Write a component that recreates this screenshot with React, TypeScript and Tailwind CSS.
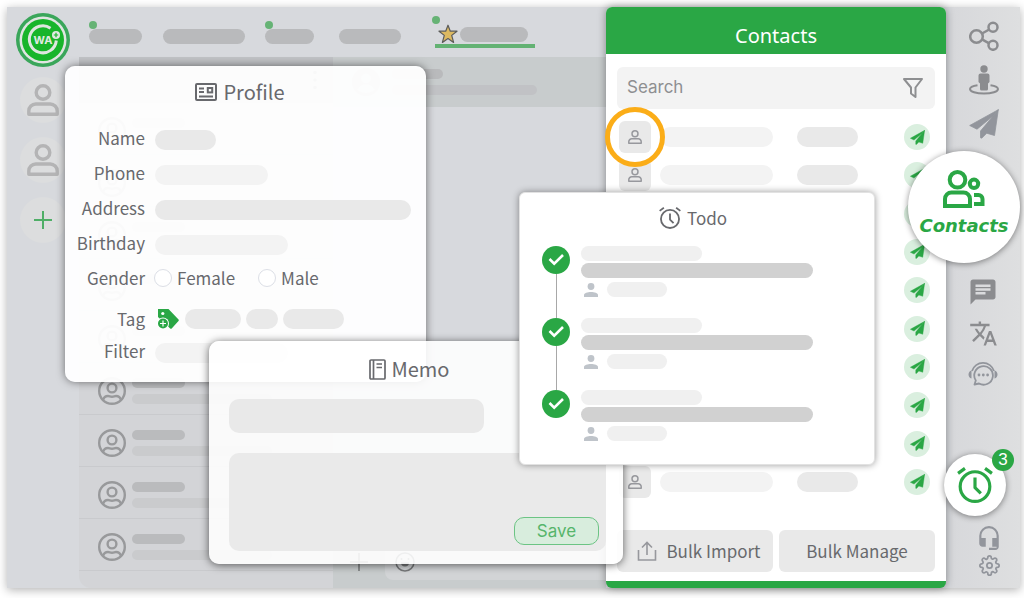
import React, { useState } from 'react';
import { MdChat, MdTranslate, MdHeadsetMic } from 'react-icons/md';
import { FiSettings } from 'react-icons/fi';

const chatRows = [1, 2, 3, 4, 5, 6, 7, 8, 9];
const contactRows = [1, 2, 3, 4, 5, 6, 7, 8, 9, 10];
const todos = [1, 2, 3];

const tabs = [
  { id: 1, width: 'w-[53px]', unread: true },
  { id: 2, width: 'w-[82px]', unread: false },
  { id: 3, width: 'w-[49px]', unread: true },
  { id: 4, width: 'w-[62px]', unread: false },
];

function PersonIcon({ className }) {
  return (
    <svg viewBox="0 0 32 32" className={className} fill="none" stroke="currentColor" strokeWidth="3.4">
      <circle cx="16" cy="8.5" r="6.8" />
      <path d="M1.8 30.2V27a7 7 0 0 1 7-7h14.4a7 7 0 0 1 7 7v3.2z" strokeLinejoin="round" />
    </svg>
  );
}

function AccountIcon({ className }) {
  return (
    <svg viewBox="0 0 28 28" className={className} fill="none" stroke="currentColor" strokeWidth="2.4">
      <circle cx="14" cy="14" r="12.8" />
      <circle cx="14" cy="11" r="4.4" />
      <path d="M5 23c1-3.500 3.500-4 5-4 1.500 0 2 .7 4 .7s2.500-.7 4-.7c1.500 0 4 .5 5 4" />
    </svg>
  );
}

function AlarmIcon({ className, strokeWidth }) {
  return (
    <svg viewBox="0 0 34 34" className={className} fill="none" stroke="currentColor" strokeWidth={strokeWidth} strokeLinejoin="round">
      <circle cx="17" cy="18.500" r="14" />
      <path d="M17 10v9.500l5.500 5.500M1 6l6.500-4.700M33 6l-6.500-4.700" />
    </svg>
  );
}

function PlaneIcon({ className }) {
  return (
    <svg viewBox="0 0 30 30" className={className} fill="currentColor" stroke="currentColor" strokeLinejoin="round" strokeWidth=".8">
      <path d="M29.300.700L.700 16.500l7.300 3.700L24 7z" />
      <path d="M29.300.700L25.500 26.500l-7.800-2.300-5 5L11.500 28.700V22z" />
    </svg>
  );
}

function LiveViewIcon() {
  return (
    <svg viewBox="0 0 30 30" className="size-[30px]" fill="currentColor">
      <circle cx="15" cy="4" r="3.700" />
      <path d="M11.500 8.500h7a2 2 0 0 1 2 2V17l-1.500 1.500v5.500a1.500 1.500 0 0 1-1.500 1.500h-5a1.500 1.500 0 0 1-1.500-1.500v-5.500L9.500 17v-6.500a2 2 0 0 1 2-2z" />
      <path d="M8.500 20.200c-4.500.7-7.500 2-7.500 3.800 0 2.600 6.200 4.600 14 4.600s14-2 14-4.600c0-1.800-3-3.100-7.500-3.800" fill="none" stroke="currentColor" strokeWidth="2" />
    </svg>
  );
}

function ShareIcon() {
  return (
    <svg viewBox="0 0 30 30" className="size-[30px]" fill="none" stroke="currentColor" strokeWidth="2.5">
      <circle cx="7.500" cy="15.500" r="6.300" />
      <circle cx="24" cy="6.300" r="4.500" />
      <circle cx="24" cy="24.300" r="4.500" />
      <path d="M13 12.500l7.200-4M13 18.300l7.200 4" />
    </svg>
  );
}

function SupportChatIcon() {
  return (
    <svg viewBox="0 0 30 26" className="h-[26px] w-[30px]" fill="none" stroke="currentColor" strokeWidth="1.800">
      <path d="M4 11a11.500 11.500 0 0 1 22 0" />
      <path d="M6.500 24.500l1.300-4a9.300 9.300 0 1 1 3.200 3z" strokeLinejoin="round" />
      <path d="M3.500 10.500c-4 1-4 7 0 8zM26.500 10.500c4 1 4 7 0 8z" fill="currentColor" stroke="none" />
      <g fill="currentColor" stroke="none">
        <circle cx="11" cy="15" r="1.400" />
        <circle cx="15.300" cy="15" r="1.400" />
        <circle cx="19.600" cy="15" r="1.400" />
      </g>
    </svg>
  );
}

function ContactsIcon() {
  return (
    <svg viewBox="0 0 42 38" className="h-[38px] w-[42px]" fill="none" stroke="currentColor" strokeWidth="4">
      <circle cx="14.500" cy="9.800" r="7.800" />
      <path d="M2 36v-7a6.500 6.500 0 0 1 6.500-6.500h12A6.500 6.500 0 0 1 27 29v7z" />
      <circle cx="31" cy="13.800" r="4.200" />
      <path d="M31 25h4.500a4 4 0 0 1 4 4v5H31" />
    </svg>
  );
}

function LogoIcon() {
  return (
    <svg viewBox="0 0 54 54" className="size-[54px]">
      <circle cx="27" cy="27" r="27" fill="#3aa65a" />
      <circle cx="27" cy="27" r="23.500" fill="#e0e5e1" />
      <circle cx="27" cy="27" r="21" fill="#18b52b" />
      <path d="M34.500 15.200A13.500 13.500 0 1 0 40.300 27.500" fill="none" stroke="#dfe6e0" strokeWidth="3" />
      <circle cx="40" cy="22" r="4" fill="#e3e9e4" />
      <path d="M40 19.800v4.400M37.800 22h4.400" stroke="#18b52b" strokeWidth="1.200" />
      <text x="27" y="31" textAnchor="middle" fontSize="11" fontWeight="700" fontFamily="Inter, sans-serif" fill="#e3e9e4">WA</text>
    </svg>
  );
}

function LeftRail() {
  return (
    <nav className="flex w-[71px] shrink-0 flex-col items-center gap-[14px] pt-[6px] text-[#b4b4b5]">
      <button aria-label="Home" className="-mb-1">
        <LogoIcon />
      </button>
      <button aria-label="Account one" className="flex size-[46px] items-center justify-center rounded-full bg-[#dcddde]">
        <PersonIcon className="size-8" />
      </button>
      <button aria-label="Account two" className="flex size-[46px] items-center justify-center rounded-full bg-[#dcddde]">
        <PersonIcon className="size-8" />
      </button>
      <button aria-label="Add account" className="flex size-[46px] items-center justify-center rounded-full bg-[#dcddde] text-[#4fae67]">
        <svg viewBox="0 0 20 20" className="size-5" stroke="currentColor" strokeWidth="2">
          <path d="M10 1v18M1 10h18" />
        </svg>
      </button>
    </nav>
  );
}

function TabBar() {
  return (
    <div className="grid h-[50px] shrink-0 grid-cols-[74px_102px_74px_96px_100px] items-center pl-[11px]">
      {tabs.map((tab) => (
        <div key={tab.id} className="relative pt-2">
          {tab.unread && <span className="absolute top-0 left-0 size-2 rounded-full bg-[#66b375]" />}
          <div className={`h-[15px] rounded-full bg-[#b9babc] ${tab.width}`} />
        </div>
      ))}
      <div className="relative border-b-4 border-[#63b273] pt-2">
        <span className="absolute top-0 -left-[3px] size-2 rounded-full bg-[#66b375]" />
        <div className="flex items-center gap-[2px] pl-[3px]">
          <svg viewBox="0 0 20 20" className="size-5 shrink-0" fill="#dcb961" stroke="#5c5c5a" strokeWidth="1.2" strokeLinejoin="round">
            <path d="M10 1.200l2.300 6H19l-5.300 4.200 1.900 7L10 14.500l-5.600 3.900 1.900-7L1 7.200h6.700z" />
          </svg>
          <div className="h-[15px] w-[68px] rounded-full bg-[#b9babc]" />
        </div>
      </div>
    </div>
  );
}

function ChatList() {
  return (
    <div className="ml-px w-[254px] shrink-0 rounded-bl-xl bg-[#d3d4d7]">
      <div className="flex h-[46px] items-center justify-end bg-[#c0c2c5] pr-4 text-[#77787b]">
        <svg viewBox="0 0 4 20" className="h-5 w-1" fill="currentColor">
          <circle cx="2" cy="2.500" r="1.800" />
          <circle cx="2" cy="10" r="1.800" />
          <circle cx="2" cy="17.500" r="1.800" />
        </svg>
      </div>
      {chatRows.map((row) => (
        <div key={row} className="flex h-[52px] gap-[6px] border-b border-[#c9cacd] pt-[14px] pl-[19px] text-[#98999b]">
          <AccountIcon className="size-7 shrink-0" />
          <div className="space-y-[6px] pt-px">
            <div className="h-[10px] w-[53px] rounded-full bg-[#babbbd]" />
            <div className="h-[10px] w-[140px] rounded-full bg-[#cacbcd]" />
          </div>
        </div>
      ))}
    </div>
  );
}

function ChatPane() {
  return (
    <div className="flex min-w-0 flex-1 flex-col">
      <div className="flex h-[50px] items-center gap-[12px] bg-[#c8cccd] pl-[19px] text-[#a5a8aa]">
        <svg viewBox="0 0 28 28" className="size-7 shrink-0">
          <circle cx="14" cy="14" r="14" fill="currentColor" />
          <circle cx="14" cy="10.500" r="5" fill="#c8cccd" />
          <path d="M5 22c4-8 14-8 18 0-5 4-13 4-18 0z" fill="#c8cccd" />
        </svg>
        <div className="space-y-[6px]">
          <div className="h-[10px] w-[51px] rounded-full bg-[#b9babc]" />
          <div className="h-[10px] w-[145px] rounded-full bg-[#c1c2c5]" />
        </div>
      </div>
      <div className="mt-auto flex h-[52px] items-center gap-4 bg-[#c8cccd] pl-[16px] text-[#77797b]">
        <svg viewBox="0 0 20 20" className="size-5 shrink-0" stroke="currentColor" strokeWidth="1.500">
          <path d="M10 1v18M1 10h18" />
        </svg>
        <div className="flex h-9 flex-1 items-center rounded-l-lg bg-[#d2d4d6] pl-[10px]">
          <svg viewBox="0 0 20 20" className="size-5" fill="none" stroke="currentColor" strokeWidth="1.500">
            <circle cx="10" cy="10" r="9" />
            <circle cx="6.500" cy="7" r="1" fill="currentColor" stroke="none" />
            <circle cx="13.500" cy="7" r="1" fill="currentColor" stroke="none" />
            <path d="M6 10.500h8a4 4 0 0 1-8 0z" fill="currentColor" stroke="none" />
          </svg>
        </div>
      </div>
    </div>
  );
}

function ContactsPanel() {
  const [query, setQuery] = useState('');

  return (
    <section className="isolate flex w-[340px] shrink-0 flex-col rounded-md border-b-[7px] border-[#2aa745] bg-white shadow-[0_0_8px_rgba(0,0,0,0.4)]">
      <h2 className="flex h-[47px] items-center justify-center rounded-t-md bg-[#2aa745] pt-[10px] font-['Noto_Sans'] text-xl text-white">Contacts</h2>
      <div className="flex flex-1 flex-col px-[11px] pt-[13px] pb-[9px]">
        <label className="flex h-[42px] items-center rounded-md bg-[#f3f3f3] pr-3 pl-[10px] text-[#8e8f91]">
          <input
            type="text"
            aria-label="Search contacts"
            placeholder="Search"
            value={query}
            onChange={(e) => setQuery(e.target.value)}
            className="min-w-0 flex-1 bg-transparent font-['Inter'] text-[17px] outline-none placeholder:text-[#8e8f91]"
          />
          <svg viewBox="0 0 20 20" className="size-5" fill="none" stroke="currentColor" strokeWidth="2" strokeLinejoin="round">
            <path d="M1 1h18l-6.500 8.500V19L8 15.500v-6z" />
          </svg>
        </label>

        <div className="mt-3 mb-8 flex flex-1 flex-col justify-between">
          {contactRows.map((row, i) => (
            <div key={row} className="flex items-center pr-[5px] pl-[2px]">
              <div className={i === 0 ? 'relative z-10 mr-[9px] size-8' : 'mr-[9px] size-8'}>
                {i === 0 && <span className="absolute -inset-[14px] rounded-full border-[5px] border-[#fbad18] bg-white" />}
                <button aria-label="Open profile" className="relative flex size-8 items-center justify-center rounded-md bg-[#e9e9e9] text-[#97989d]">
                  <PersonIcon className="size-[14px]" />
                </button>
              </div>
              <div className="h-5 w-[113px] rounded-full bg-[#f3f3f3]" />
              <div className="ml-6 h-5 w-[61px] rounded-full bg-[#e9e9e9]" />
              <button aria-label="Send message" className="ml-auto flex size-[26px] items-center justify-center rounded-full bg-[#daefdf] text-[#2aa745]">
                <PlaneIcon className="size-[15px]" />
              </button>
            </div>
          ))}
        </div>

        <div className="grid grid-cols-2 gap-[6px] text-[17px] text-[#68696d]">
          <button className="flex h-[42px] items-center justify-center gap-[9px] rounded-md bg-[#e9e9e9] pl-2">
            <svg viewBox="0 0 20 20" className="size-5 text-[#97989d]" fill="none" stroke="currentColor" strokeWidth="1.600">
              <path d="M1.500 9v10h17V9M10 14V1.500M5 6.500l5-5 5 5" />
            </svg>
            Bulk Import
          </button>
          <button className="h-[42px] rounded-md bg-[#e9e9e9]">Bulk Manage</button>
        </div>
      </div>
    </section>
  );
}

function RightRail() {
  return (
    <nav className="ml-[5px] flex w-[69px] shrink-0 flex-col bg-linear-to-r from-[#d7d8db] to-[#dedfe0] pt-[14px] pb-3 text-[#8b8c8f]">
      <div className="flex flex-col items-center gap-[14px] pr-1">
        <button aria-label="Share"><ShareIcon /></button>
        <button aria-label="Live view"><LiveViewIcon /></button>
        <button aria-label="Broadcast" className="text-[#92959c]"><PlaneIcon className="size-[30px]" /></button>
      </div>
      <div className="mt-[138px] flex flex-col items-center gap-3 pr-[5px]">
        <button aria-label="Quick replies"><MdChat className="size-[30px]" /></button>
        <button aria-label="Translate"><MdTranslate className="size-[29px]" /></button>
        <button aria-label="Support chat" className="text-[#92959c]"><SupportChatIcon /></button>
      </div>
      <div className="mt-auto flex flex-col items-center gap-1 pl-[7px] text-[#92959c]">
        <button aria-label="Customer service"><MdHeadsetMic className="size-[26px]" /></button>
        <button aria-label="Settings"><FiSettings className="size-[21px]" /></button>
      </div>
    </nav>
  );
}

function Field({ id, label, width }) {
  return (
    <div className="flex h-[35px] items-center gap-[10px]">
      <label htmlFor={id} className="w-[80px] text-right">{label}</label>
      <input id={id} type="text" className={`mt-1 h-5 rounded-full px-3 text-xs outline-none ${width}`} />
    </div>
  );
}

function ProfileCard() {
  return (
    <form className="absolute top-[66px] left-[65px] w-[361px] rounded-[10px] bg-white/95 pt-[11px] pb-[14px] text-[17px] leading-[30px] text-[#68696d] shadow-[0_0_8px_rgba(0,0,0,0.5)]">
      <h2 className="mb-[13px] flex items-center justify-center gap-[6px] pr-[11px] text-xl leading-[30px]">
        <svg viewBox="0 0 22 18" className="h-[18px] w-[22px]" fill="none" stroke="currentColor" strokeWidth="2">
          <rect x="1" y="1" width="20" height="16" rx="1" />
          <path d="M4 5.500h5M4 9h5M4 13.500h14" />
          <rect x="12.800" y="5" width="4.400" height="4.400" />
        </svg>
        Profile
      </h2>
      <Field id="name" label="Name" width="w-[61px] bg-[#e9e9e9]" />
      <Field id="phone" label="Phone" width="w-[113px] bg-[#f3f3f3]" />
      <Field id="address" label="Address" width="w-[256px] bg-[#e9e9e9]" />
      <Field id="birthday" label="Birthday" width="w-[133px] bg-[#f3f3f3]" />
      <div role="radiogroup" aria-label="Gender" className="flex h-[35px] items-center gap-[9px]">
        <span className="w-[80px] text-right">Gender</span>
        <label className="flex items-center gap-[5px]">
          <input type="radio" name="gender" value="female" className="size-[18px] appearance-none rounded-full border border-[#dcdfe6] bg-white checked:border-[5px] checked:border-[#2aa745]" />
          Female
        </label>
        <label className="ml-[14px] flex items-center gap-[5px]">
          <input type="radio" name="gender" value="male" className="size-[18px] appearance-none rounded-full border border-[#dcdfe6] bg-white checked:border-[5px] checked:border-[#2aa745]" />
          Male
        </label>
      </div>
      <div className="mt-[7px] flex h-[34px] items-center gap-[5px]">
        <span className="mr-[7px] w-[80px] text-right">Tag</span>
        <button type="button" aria-label="Add tag" className="mr-px">
          <svg viewBox="0 0 22 22" className="size-[22px]">
            <path d="M1 1h10.500L21.500 11.500a1 1 0 0 1 0 1.400l-6.800 7.500a1 1 0 0 1-1.500 0L1 9z" fill="#2aa745" />
            <circle cx="5.800" cy="5.500" r="1.600" fill="#fff" />
            <circle cx="6" cy="15.500" r="6" fill="#fff" />
            <circle cx="6" cy="15.500" r="5" fill="#2aa745" />
            <path d="M6 12.500v6M3 15.500h6" stroke="#fff" strokeWidth="1.200" />
          </svg>
        </button>
        <span className="h-5 w-[56px] rounded-full bg-[#e9e9e9]" />
        <span className="h-5 w-[32px] rounded-full bg-[#e9e9e9]" />
        <span className="h-5 w-[61px] rounded-full bg-[#e9e9e9]" />
      </div>
      <div className="-mt-[3px]">
        <Field id="filter" label="Filter" width="w-[133px] bg-[#f3f3f3]" />
      </div>
    </form>
  );
}

function MemoCard() {
  return (
    <form className="absolute top-[341px] left-[209px] w-[414px] rounded-[10px] bg-white/88 px-5 pt-[13px] pb-[13px] text-[#68696d] shadow-[0_1px_8px_rgba(0,0,0,0.6)]">
      <h2 className="mb-[15px] flex items-center justify-center gap-[6px] pr-[14px] text-xl leading-[30px]">
        <svg viewBox="0 0 17 21" className="h-[21px] w-[17px]" fill="none" stroke="currentColor" strokeWidth="1.700">
          <rect x="1" y="1" width="15" height="19" rx="1" />
          <path d="M4.500 1v19M7.500 5h5.500M7.500 8.500h5.500" />
        </svg>
        Memo
      </h2>
      <input type="text" aria-label="Memo title" className="block h-[34px] w-[255px] rounded-[10px] bg-[#e9e9e9] px-3 outline-none" />
      <div className="relative mt-5 -mr-[3px]">
        <textarea aria-label="Memo" className="block h-[98px] w-full resize-none rounded-[10px] bg-[#e9e9e9]/95 p-3 outline-none" />
        <button type="button" className="absolute right-[7px] bottom-[6px] h-[28px] w-[85px] rounded-[10px] border border-[#6cc484] bg-[#d8eddd] font-['Inter'] text-[17px] leading-[26px] text-[#56b56b]">
          Save
        </button>
      </div>
    </form>
  );
}

function TodoCard() {
  return (
    <section className="absolute top-[192px] right-[149px] w-[356px] rounded-md border border-[#e2e2e2] bg-white px-[22px] pt-[11px] pb-[2px] text-[#68696d] shadow-[0_0_7px_rgba(0,0,0,0.4)]">
      <h2 className="mb-[14px] flex items-center justify-center gap-[6px] pr-2 text-[17px] leading-7">
        <AlarmIcon className="size-[22px]" strokeWidth="2.800" />
        Todo
      </h2>
      <ul>
        {todos.map((todo, i) => (
          <li key={todo} className="flex h-[72px] gap-[11px]">
            <div className="flex flex-col items-center">
              <svg viewBox="0 0 28 28" className="size-7 shrink-0">
                <circle cx="14" cy="14" r="14" fill="#2aa745" />
                <path d="M7.500 13l4.700 4.700L21 9" fill="none" stroke="#fff" strokeWidth="2.600" />
              </svg>
              {i < todos.length - 1 && <span className="w-px flex-1 bg-[#a8a8a8]" />}
            </div>
            <div>
              <div className="mb-[2px] h-[15px] w-[121px] rounded-full bg-[#f0f0f0]" />
              <div className="mb-1 h-[15px] w-[232px] rounded-full bg-[#d1d1d1]" />
              <div className="flex items-center gap-[9px] pl-[3px]">
                <svg viewBox="0 0 14 14" className="size-[14px] text-[#bfc4ca]" fill="currentColor">
                  <circle cx="7" cy="3.500" r="3.400" />
                  <path d="M0 14v-2c0-4 14-4 14 0v2z" />
                </svg>
                <div className="h-[15px] w-[60px] rounded-full bg-[#f0f0f0]" />
              </div>
            </div>
          </li>
        ))}
      </ul>
    </section>
  );
}

export default function App() {
  return (
    <div className="relative flex min-h-screen bg-white pt-[7px] pr-[4px] pb-[10px] pl-[7px] font-['Noto_Sans_CJK_SC',sans-serif]">
      <main className="flex flex-1 bg-[#d7d9dd] shadow-[0_2px_9px_rgba(0,0,0,0.3)]">
        <LeftRail />
        <div className="flex min-w-0 flex-1 flex-col">
          <TabBar />
          <div className="flex min-h-0 flex-1">
            <ChatList />
            <ChatPane />
          </div>
        </div>
        <ContactsPanel />
        <RightRail />
      </main>

      <ProfileCard />
      <MemoCard />
      <TodoCard />

      {/* Highlighted rail shortcuts */}
      <button className="absolute top-[151px] right-[4px] flex size-[112px] flex-col items-center gap-2 rounded-full bg-white pt-[19px] text-[#2aa745] shadow-[0_1px_6px_rgba(0,0,0,0.45)]">
        <ContactsIcon />
        <span className="font-['DejaVu_Sans'] text-[18px] leading-5 font-bold italic">Contacts</span>
      </button>
      <button aria-label="Todo reminders" className="absolute top-[454px] right-[18px] flex size-[62px] items-center justify-center rounded-full bg-white text-[#2aa745] shadow-[0_1px_6px_rgba(0,0,0,0.45)]">
        <AlarmIcon className="size-9" strokeWidth="3" />
        <span className="absolute -top-[5px] -right-2 flex size-[22px] items-center justify-center rounded-full bg-[#2aa745] font-['Liberation_Sans'] text-[17px] text-white">3</span>
      </button>
    </div>
  );
}
